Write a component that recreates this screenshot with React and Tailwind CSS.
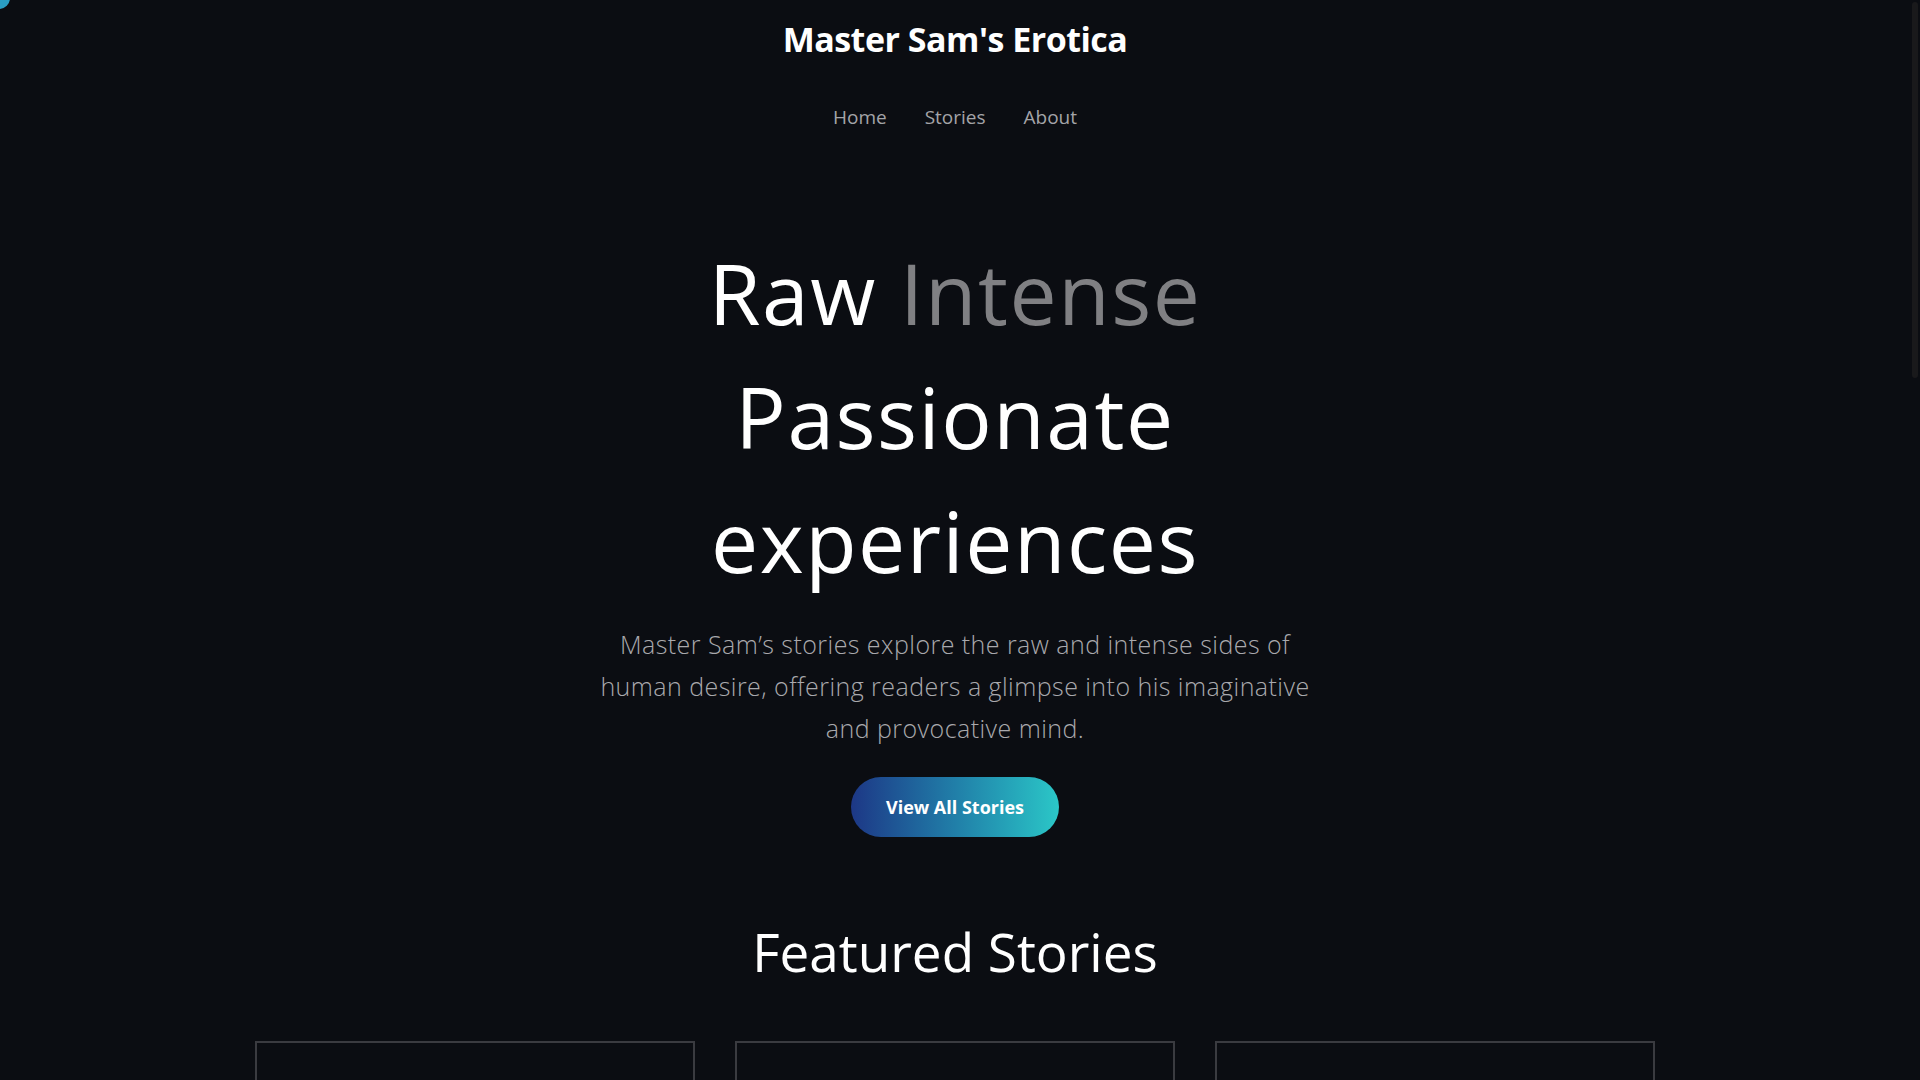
export default function App() {
  return (
    <div className="relative flex h-screen w-full overflow-hidden bg-[#0b0d12] font-['Open_Sans',sans-serif]">
      <div className="absolute -left-[12px] -top-[13px] h-[22px] w-[22px] rounded-full bg-[#2a9ec4]" />
      <main className="flex flex-1 flex-col items-center">
        <header className="flex flex-col items-center pt-[12px]">
          <h1 className="text-[34px] font-bold leading-[54px] tracking-[-0.5px] text-white">Master Sam's Erotica</h1>
          <nav className="mt-[38px] flex gap-[38px] text-[19px] leading-[27px] text-[#a4a4a8]">
            <a>Home</a>
            <a>Stories</a>
            <a>About</a>
          </nav>
        </header>
        <section className="mt-[100px] flex flex-col items-center text-center">
          <h2 className="text-[84px] font-medium leading-[124px] tracking-[1.5px] text-white">
            <span>Raw </span>
            <span className="text-[#808083]">Intense</span>
            <br />
            Passionate
            <br />
            experiences
          </h2>
          <p className="mt-[20px] max-w-[745px] text-[25px] font-light leading-[42px] tracking-[0.45px] text-[#a9a9ad]">
            Master Sam’s stories explore the raw and intense sides of human desire, offering readers a glimpse into his imaginative and provocative mind.
          </p>
          <button className="mt-[28px] h-[60px] w-[208px] rounded-full bg-gradient-to-r from-[#1d3786] to-[#2bc7c7] text-[18px] font-bold text-white">
            View All Stories
          </button>
        </section>
        <section className="mt-[81px] flex w-full flex-col items-center">
          <h2 className="text-[53px] font-medium leading-[67px] text-white">Featured Stories</h2>
          <div className="mt-[56px] grid w-[1400px] grid-cols-3 gap-[40px]">
            <div className="h-[400px] border-2 border-[#3a3b40]" />
            <div className="h-[400px] border-2 border-[#3a3b40]" />
            <div className="h-[400px] border-2 border-[#3a3b40]" />
          </div>
        </section>
      </main>
      <div className="flex w-[10px] justify-center bg-[#0b0d12] pt-[2px]">
        <div className="h-[376px] w-[6px] rounded-full bg-[#19191b]" />
      </div>
    </div>
  );
}
